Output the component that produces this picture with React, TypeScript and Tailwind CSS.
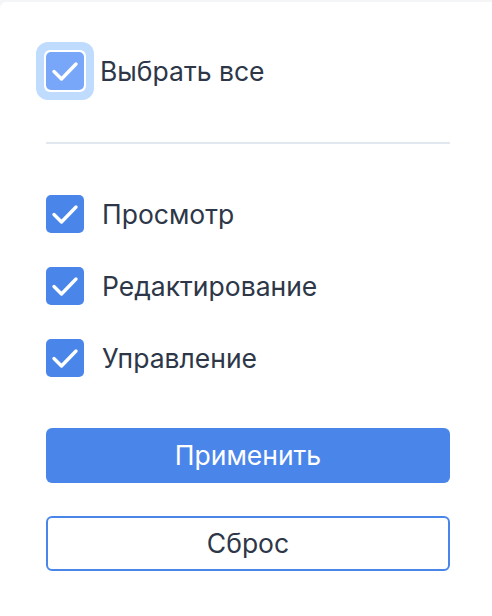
import { useState } from "react";

const items = ["Просмотр", "Редактирование", "Управление"];

// white check used inside every box
const Check = () => (
  <svg viewBox="0 0 38 38" className="w-[38px] h-[38px]" fill="none">
    <path d="M8 19.5l7.5 7.5L30 12" stroke="#fff" strokeWidth="3.4" strokeLinecap="round" strokeLinejoin="round" />
  </svg>
);

const Box = ({ checked }: { checked: boolean }) => (
  <span
    className={
      "flex w-[38px] h-[38px] shrink-0 items-center justify-center rounded-[5px] " +
      (checked ? "bg-[#4a86ea]" : "border-2 border-[#cbd5e0] bg-white")
    }
  >
    {checked && <Check />}
  </span>
);

export default function App() {
  const [selected, setSelected] = useState<string[]>(items);
  const all = selected.length === items.length;

  const toggle = (name: string) =>
    setSelected((s) => (s.includes(name) ? s.filter((x) => x !== name) : [...s, name]));

  return (
    <div className="min-h-[616px] bg-[#f4f5f7] pt-[2px] font-['Inter',sans-serif] text-[#2d3748]">
      <div className="min-h-[614px] rounded-tl-[6px] bg-white pl-[46px] pr-[42px] pt-[50px]">
        <button
          className="flex items-center gap-[16px]"
          onClick={() => setSelected(all ? [] : items)}
        >
          <span className="flex rounded-[12px] bg-[#bfdbfe] p-[8px] -m-[10px]">
            <span className="flex rounded-[6px] bg-white p-[2px]">
              <span className="flex w-[38px] h-[38px] items-center justify-center rounded-[5px] bg-[#78a6f8]">
                {all && <Check />}
              </span>
            </span>
          </span>
          <span className="text-[26.5px] leading-[38px]">Выбрать все</span>
        </button>

        <div className="mt-[52px] h-[2px] bg-[#e2e8f0]" />

        <div className="mt-[51px] flex flex-col gap-[34px]">
          {items.map((name) => (
            <button key={name} className="flex items-center gap-[18px]" onClick={() => toggle(name)}>
              <Box checked={selected.includes(name)} />
              <span className="text-[26.5px] leading-[38px]">{name}</span>
            </button>
          ))}
        </div>

        <button className="mt-[51px] flex h-[55px] w-full items-center justify-center rounded-[6px] bg-[#4a86ea] text-[26.5px] text-white">
          Применить
        </button>
        <button
          className="mt-[33px] flex h-[55px] w-full items-center justify-center rounded-[6px] border-2 border-[#4a86ea] bg-white text-[26.5px]"
          onClick={() => setSelected([])}
        >
          Сброс
        </button>
      </div>
    </div>
  );
}
